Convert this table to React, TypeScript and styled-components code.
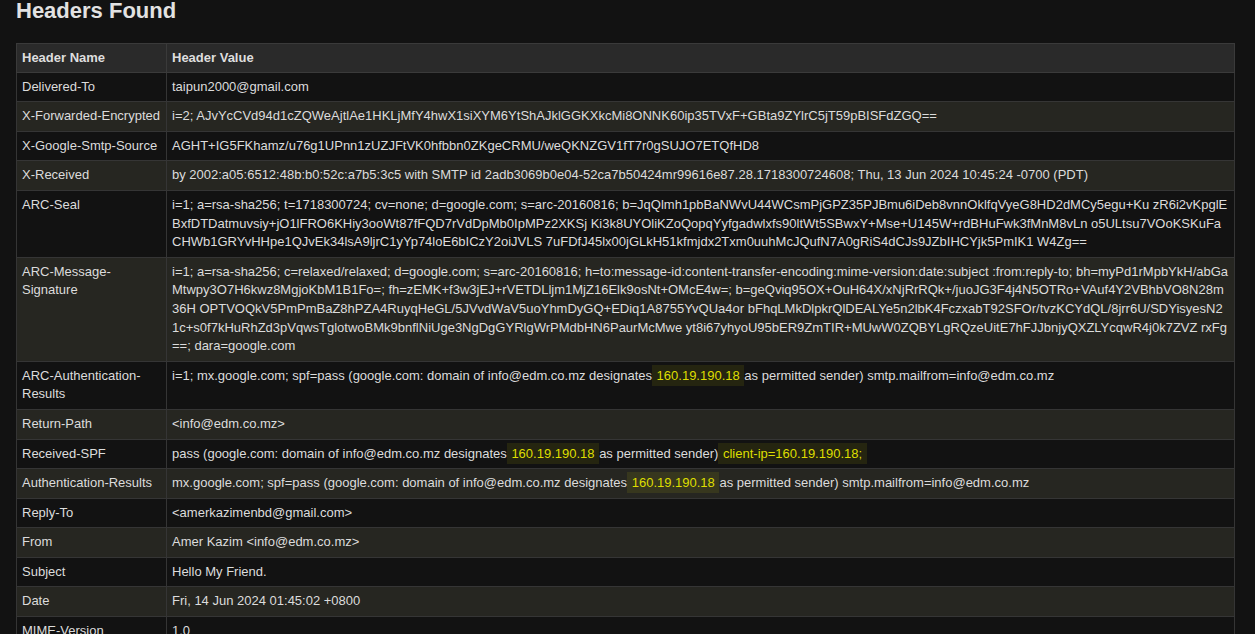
import React from "react";
import styled, { createGlobalStyle } from "styled-components";

const GlobalStyle = createGlobalStyle`
  html, body {
    margin: 0;
    padding: 0;
    background: #121212;
  }
  body {
    font-family: "Liberation Sans", Arial, sans-serif;
    color: #dcdcdc;
  }
`;

const Page = styled.main`
  padding: 0 20px 40px 16px;
`;

const Title = styled.h2`
  margin: 0 0 21px;
  font-size: 22px;
  line-height: 22px;
  font-weight: 700;
  color: #e2e2e2;
`;

const Table = styled.table`
  width: 100%;
  border-collapse: collapse;
  table-layout: fixed;
  font-size: 13px;
  line-height: 18.6px;
  border: 1px solid #353535;
`;

const NameCol = styled.col`
  width: 150px;
`;

const HeadRow = styled.tr`
  background: #2a2a2a;
`;

const HeadCell = styled.th`
  padding: 5px 5px 4px;
  text-align: left;
  font-weight: 700;
  color: #dedede;
  border: 1px solid #3a3a3a;
`;

const Row = styled.tr`
  background: #121212;
  &:nth-child(even) {
    background: #262621;
  }
`;

const Cell = styled.td<{ $value?: boolean }>`
  padding: 5px 5px;
  vertical-align: top;
  border: 1px solid #353535;
  color: #dcdcdc;
  word-break: ${(p) => (p.$value ? "break-all" : "normal")};
`;

const Mark = styled.span`
  padding: 3px 1px;
  background: rgba(235, 235, 0, 0.09);
  color: #dede00;
  white-space: pre-wrap;
`;

type Header = { name: string; value: React.ReactNode };

const ip = <Mark>{" 160.19.190.18 "}</Mark>;

const headers: Header[] = [
  { name: "Delivered-To", value: "taipun2000@gmail.com" },
  {
    name: "X-Forwarded-Encrypted",
    value:
      "i=2; AJvYcCVd94d1cZQWeAjtlAe1HKLjMfY4hwX1siXYM6YtShAJklGGKXkcMi8ONNK60ip35TVxF+GBta9ZYlrC5jT59pBISFdZGQ==",
  },
  {
    name: "X-Google-Smtp-Source",
    value: "AGHT+IG5FKhamz/u76g1UPnn1zUZJFtVK0hfbbn0ZKgeCRMU/weQKNZGV1fT7r0gSUJO7ETQfHD8",
  },
  {
    name: "X-Received",
    value:
      "by 2002:a05:6512:48b:b0:52c:a7b5:3c5 with SMTP id 2adb3069b0e04-52ca7b50424mr99616e87.28.1718300724608; Thu, 13 Jun 2024 10:45:24 -0700 (PDT)",
  },
  {
    name: "ARC-Seal",
    value:
      "i=1; a=rsa-sha256; t=1718300724; cv=none; d=google.com; s=arc-20160816; b=JqQlmh1pbBaNWvU44WCsmPjGPZ35PJBmu6iDeb8vnnOklfqVyeG8HD2dMCy5egu+Ku zR6i2vKpglEBxfDTDatmuvsiy+jO1lFRO6KHiy3ooWt87fFQD7rVdDpMb0IpMPz2XKSj Ki3k8UYOliKZoQopqYyfgadwlxfs90ltWt5SBwxY+Mse+U145W+rdBHuFwk3fMnM8vLn o5ULtsu7VOoKSKuFaCHWb1GRYvHHpe1QJvEk34lsA9ljrC1yYp74loE6bICzY2oiJVLS 7uFDfJ45lx00jGLkH51kfmjdx2Txm0uuhMcJQufN7A0gRiS4dCJs9JZbIHCYjk5PmIK1 W4Zg==",
  },
  {
    name: "ARC-Message-Signature",
    value:
      "i=1; a=rsa-sha256; c=relaxed/relaxed; d=google.com; s=arc-20160816; h=to:message-id:content-transfer-encoding:mime-version:date:subject :from:reply-to; bh=myPd1rMpbYkH/abGaMtwpy3O7H6kwz8MgjoKbM1B1Fo=; fh=zEMK+f3w3jEJ+rVETDLljm1MjZ16Elk9osNt+OMcE4w=; b=geQviq95OX+OuH64X/xNjRrRQk+/juoJG3F4j4N5OTRo+VAuf4Y2VBhbVO8N28m36H OPTVOQkV5PmPmBaZ8hPZA4RuyqHeGL/5JVvdWaV5uoYhmDyGQ+EDiq1A8755YvQUa4or bFhqLMkDlpkrQlDEALYe5n2lbK4FczxabT92SFOr/tvzKCYdQL/8jrr6U/SDYisyesN2 1c+s0f7kHuRhZd3pVqwsTglotwoBMk9bnflNiUge3NgDgGYRlgWrPMdbHN6PaurMcMwe yt8i67yhyoU95bER9ZmTIR+MUwW0ZQBYLgRQzeUitE7hFJJbnjyQXZLYcqwR4j0k7ZVZ rxFg==; dara=google.com",
  },
  {
    name: "ARC-Authentication-Results",
    value: (
      <>
        i=1; mx.google.com; spf=pass (google.com: domain of info@edm.co.mz designates{ip}as permitted
        sender) smtp.mailfrom=info@edm.co.mz
      </>
    ),
  },
  { name: "Return-Path", value: "<info@edm.co.mz>" },
  {
    name: "Received-SPF",
    value: (
      <>
        pass (google.com: domain of info@edm.co.mz designates{ip}as permitted sender)
        <Mark>{" client-ip=160.19.190.18; "}</Mark>
      </>
    ),
  },
  {
    name: "Authentication-Results",
    value: (
      <>
        mx.google.com; spf=pass (google.com: domain of info@edm.co.mz designates{ip}as permitted
        sender) smtp.mailfrom=info@edm.co.mz
      </>
    ),
  },
  { name: "Reply-To", value: "<amerkazimenbd@gmail.com>" },
  { name: "From", value: "Amer Kazim <info@edm.co.mz>" },
  { name: "Subject", value: "Hello My Friend." },
  { name: "Date", value: "Fri, 14 Jun 2024 01:45:02 +0800" },
  { name: "MIME-Version", value: "1.0" },
  { name: "Content-Type", value: "text/html; charset=utf-8" },
  { name: "Content-Transfer-Encoding", value: "quoted-printable" },
];

export default function App() {
  return (
    <>
      <GlobalStyle />
      <Page>
        <Title>Headers Found</Title>
        <Table>
          <colgroup>
            <NameCol />
            <col />
          </colgroup>
          <thead>
            <HeadRow>
              <HeadCell>Header Name</HeadCell>
              <HeadCell>Header Value</HeadCell>
            </HeadRow>
          </thead>
          <tbody>
            {headers.map((h) => (
              <Row key={h.name}>
                <Cell>{h.name}</Cell>
                <Cell $value>{h.value}</Cell>
              </Row>
            ))}
          </tbody>
        </Table>
      </Page>
    </>
  );
}
